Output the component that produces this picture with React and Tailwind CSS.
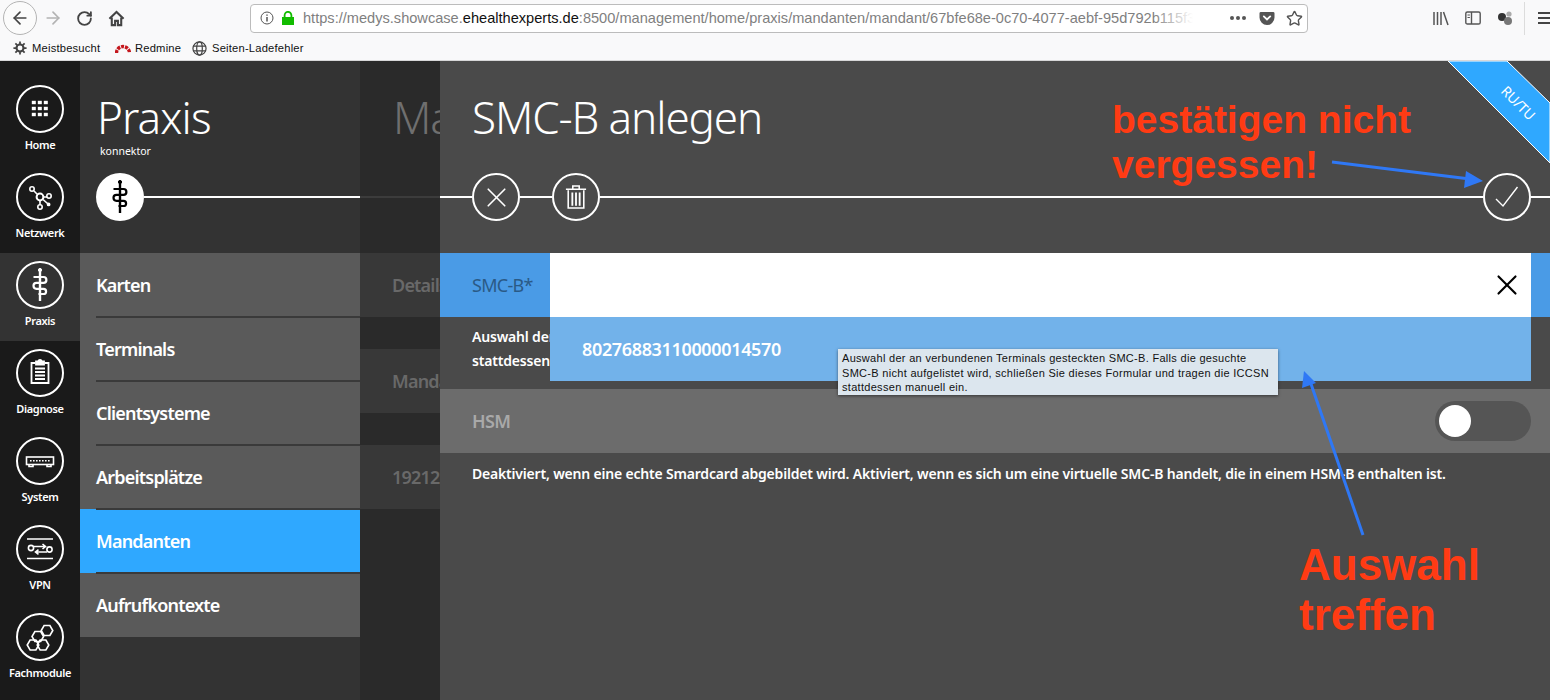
import React from 'react';
import { ArrowLeft, ArrowRight, RotateCw, Star, X } from 'lucide-react';

const sans = 'font-["Noto_Sans",sans-serif]';

function Caduceus({ className = 'text-white' }) {
  return (
    <svg viewBox="0 0 48 48" className={`w-12 h-12 ${className}`} fill="none" stroke="currentColor">
      <path d="M24 8v32" strokeWidth="2.4" />
      <circle cx="24" cy="9" r="1.6" fill="currentColor" />
      <path d="M17.5 16h10a2.9 2.9 0 0 1 0 5.8h-7a3 3 0 0 0 0 6h7a2.6 2.6 0 0 1 0 5.2h-5" strokeWidth="2.2" />
    </svg>
  );
}

function HomeGrid() {
  const cells = [16, 22, 28];
  return (
    <svg viewBox="0 0 48 48" className="w-12 h-12 text-white" fill="currentColor">
      {cells.map((y) => cells.map((x) => <rect key={`${x}-${y}`} x={x - 0.2} y={y - 0.2} width="4" height="3.4" />))}
    </svg>
  );
}

function Network() {
  return (
    <svg viewBox="0 0 48 48" className="w-12 h-12 text-white" fill="none" stroke="currentColor" strokeWidth="1.6">
      <path d="M18 18l4 4M27 24h4M24 27v5" />
      <circle cx="24" cy="24" r="3.4" strokeWidth="2" />
      <circle cx="16" cy="16" r="2.2" />
      <circle cx="33" cy="23" r="2.2" />
      <circle cx="24" cy="34" r="2.2" />
      <path d="M27 26.5l4.5 4" />
      <circle cx="32.6" cy="31.4" r="1.1" fill="currentColor" />
    </svg>
  );
}

function Clipboard() {
  return (
    <svg viewBox="0 0 48 48" className="w-12 h-12 text-white" fill="none" stroke="currentColor" strokeWidth="1.8">
      <path d="M19.5 14H15.5v20h17V14h-4" />
      <path d="M20 15.5v-3h2.4a1.6 1.6 0 0 1 3.2 0H28v3z" fill="currentColor" />
      <path d="M19 19.5h10M19 23h10M19 26.5h10M19 30h10" />
    </svg>
  );
}

function Switch() {
  return (
    <svg viewBox="0 0 48 48" className="w-12 h-12 text-white" fill="none" stroke="currentColor" strokeWidth="1.6">
      <rect x="10.5" y="20" width="27" height="7.5" />
      <path d="M13 27.5v2h4v-2M31 27.5v2h4v-2" />
      <path d="M14 23.8h20" strokeDasharray="1.6 1.4" />
    </svg>
  );
}

function Vpn() {
  return (
    <svg viewBox="0 0 48 48" className="w-12 h-12 text-white" fill="none" stroke="currentColor" strokeWidth="1.6">
      <path d="M11 14h26M11 33.5h26" />
      <circle cx="15" cy="23" r="2.6" />
      <circle cx="33.5" cy="24.5" r="2.6" />
      <path d="M18 21.5h11M26.5 19l3 2.5-3 2.5" />
      <path d="M31 27H20M22.5 24.6l-3 2.4 3 2.4" />
    </svg>
  );
}

function hexPoints(cx, cy, r) {
  return [0, 60, 120, 180, 240, 300]
    .map((a) => `${cx + r * Math.cos((a * Math.PI) / 180)},${cy + r * Math.sin((a * Math.PI) / 180)}`)
    .join(' ');
}

function Hexes() {
  return (
    <svg viewBox="0 0 48 48" className="w-12 h-12 text-white" fill="none" stroke="currentColor" strokeWidth="1.6">
      <polygon points={hexPoints(31, 17.5, 5.8)} />
      <polygon points={hexPoints(21.8, 23.5, 5.8)} />
      <polygon points={hexPoints(17, 32, 5.8)} />
      <polygon points={hexPoints(27, 32, 5.8)} />
    </svg>
  );
}

const navItems = [
  { label: 'Home', icon: <HomeGrid /> },
  { label: 'Netzwerk', icon: <Network /> },
  { label: 'Praxis', icon: <Caduceus />, active: true },
  { label: 'Diagnose', icon: <Clipboard /> },
  { label: 'System', icon: <Switch /> },
  { label: 'VPN', icon: <Vpn /> },
  { label: 'Fachmodule', icon: <Hexes /> },
];

const menuItems = ['Karten', 'Terminals', 'Clientsysteme', 'Arbeitsplätze', 'Mandanten', 'Aufrufkontexte'];

function BrowserChrome() {
  return (
    <div className='h-[61px] shrink-0 bg-[#f9f9fa] border-b border-[#d7d7d8] font-["Liberation_Sans",sans-serif]'>
      <div className="h-[36px] flex items-center">
        <div className="ml-[3px] w-[34px] h-[34px] shrink-0 rounded-full border border-[#b4b4b4] bg-[#fbfbfb] flex items-center justify-center">
          <ArrowLeft size={20} strokeWidth={2} className="text-[#444]" />
        </div>
        <ArrowRight size={20} strokeWidth={2} className="ml-[6px] text-[#b3b3b3] shrink-0" />
        <RotateCw size={17} strokeWidth={2.6} className="ml-[13px] text-[#444] shrink-0" />
        <svg viewBox="0 0 18 18" className="ml-[15px] w-[17px] h-[17px] shrink-0 text-[#444]" fill="none" stroke="currentColor" strokeWidth="2.2">
          <path d="M1.5 9.2L9 2l7.5 7.2" />
          <path d="M4 8v8h3.5v-4.5h3V16H14V8" />
        </svg>
        <div className="ml-[125px] w-[1058px] h-[29px] shrink-0 bg-white border border-[#bcbcbc] rounded-[4px] flex items-center">
          <svg viewBox="0 0 14 14" className="ml-[9px] w-[14px] h-[14px] shrink-0 text-[#555]" fill="none" stroke="currentColor" strokeWidth="1">
            <circle cx="7" cy="7" r="6" />
            <path d="M7 6v4.4" strokeWidth="1.5" />
            <path d="M7 3.4v1.4" strokeWidth="1.5" />
          </svg>
          <svg viewBox="0 0 14 14" className="ml-[7px] w-[14px] h-[14px] shrink-0 text-[#12bc00]" fill="currentColor">
            <path d="M1 6h12v8H1z" />
            <path d="M3.6 6.5V4.2a3.4 3.4 0 0 1 6.8 0v2.3" fill="none" stroke="currentColor" strokeWidth="1.8" />
          </svg>
          <div className="relative ml-[8px] w-[890px] shrink-0 overflow-hidden whitespace-nowrap pt-px text-[14.6px] text-[#7f7f7f]">
            https://medys.showcase.<span className="text-[#111]">ehealthexperts.de</span>:8500/management/home/praxis/mandanten/mandant/67bfe68e-0c70-4077-aebf-95d792b115f3
            <div className="absolute top-0 bottom-0 right-0 w-[40px] bg-gradient-to-r from-white/0 to-white" />
          </div>
          <div className="ml-[37px] flex gap-[2px] shrink-0">
            <span className="w-[4px] h-[4px] rounded-full bg-[#555]" />
            <span className="w-[4px] h-[4px] rounded-full bg-[#555]" />
            <span className="w-[4px] h-[4px] rounded-full bg-[#555]" />
          </div>
          <svg viewBox="0 0 16 16" className="ml-[13px] w-[16px] h-[15px] shrink-0 text-[#555]">
            <path d="M1.5 1h13A1.5 1.5 0 0 1 16 2.5V7A8 8 0 0 1 0 7V2.5A1.5 1.5 0 0 1 1.5 1z" fill="currentColor" />
            <path d="M4.6 5.8L8 9l3.4-3.2" fill="none" stroke="#fff" strokeWidth="2" strokeLinecap="round" />
          </svg>
          <Star size={17} strokeWidth={2} className="ml-[11px] text-[#555] shrink-0" />
        </div>
        <svg viewBox="0 0 16 16" className="ml-[125px] w-[16px] h-[16px] shrink-0 text-[#555]" fill="none" stroke="currentColor" strokeWidth="1.5">
          <path d="M1 2v13M4.5 2v13M8 2v13M10.5 2l4.5 13" />
        </svg>
        <svg viewBox="0 0 16 16" className="ml-[16px] w-[16px] h-[16px] shrink-0 text-[#555]" fill="none" stroke="currentColor" strokeWidth="1.4">
          <rect x="0.8" y="2" width="14.4" height="12" rx="1.6" />
          <path d="M6.5 2v12" />
          <path d="M2.5 5h2.4M2.5 7.5h2.4" strokeWidth="1" />
        </svg>
        <svg viewBox="0 0 16 16" className="ml-[16px] w-[16px] h-[16px] shrink-0">
          <circle cx="5" cy="7" r="4" fill="#333" />
          <circle cx="11" cy="11" r="4" fill="#777" />
          <circle cx="12" cy="4" r="2.6" fill="#aaa" />
        </svg>
        <div className="ml-[11px] w-px h-[33px] bg-[#dcdcdc] shrink-0" />
        <div className="ml-[13px] flex flex-col gap-[3px] shrink-0 w-[13px] overflow-hidden">
          <span className="h-[2px] w-[16px] bg-[#444]" />
          <span className="h-[2px] w-[16px] bg-[#444]" />
          <span className="h-[2px] w-[16px] bg-[#444]" />
        </div>
      </div>
      <div className="h-[24px] flex items-center text-[11.2px] text-[#111] tracking-[0.2px]">
        <svg viewBox="0 0 16 16" className="ml-[13px] w-[14px] h-[14px] shrink-0 text-[#444]" fill="none" stroke="currentColor">
          <circle cx="8" cy="8" r="4" strokeWidth="2.4" />
          <path d="M8 0.5v3M8 12.5v3M0.5 8h3M12.5 8h3M2.7 2.7l2.1 2.1M11.2 11.2l2.1 2.1M2.7 13.3l2.1-2.1M11.2 4.8l2.1-2.1" strokeWidth="2" />
        </svg>
        <span className="ml-[5px] w-[83px] shrink-0">Meistbesucht</span>
        <svg viewBox="0 0 16 12" className="w-[16px] h-[12px] shrink-0" fill="none">
          <path d="M1.5 11A6.5 6.5 0 0 1 14.5 11" stroke="#c4161c" strokeWidth="3.4" strokeDasharray="3 1" />
        </svg>
        <span className="ml-[4px] w-[58px] shrink-0">Redmine</span>
        <svg viewBox="0 0 16 16" className="-ml-px w-[15px] h-[15px] shrink-0 text-[#444]" fill="none" stroke="currentColor" strokeWidth="1.3">
          <circle cx="8" cy="8" r="7" />
          <ellipse cx="8" cy="8" rx="3" ry="7" />
          <path d="M1.4 5.5h13.2M1.4 10.5h13.2" />
        </svg>
        <span className="ml-[5px]">Seiten-Ladefehler</span>
      </div>
    </div>
  );
}

function Sidebar() {
  return (
    <nav className="w-[80px] shrink-0 bg-[#1a1a1a] pt-[16px]">
      {navItems.map((item) => (
        <div key={item.label} className={`h-[88px] pt-[8px] flex flex-col items-center ${item.active ? 'bg-[#333333]' : ''}`}>
          <div className="w-[48px] h-[48px] rounded-full border-2 border-white flex items-center justify-center shrink-0">
            <div className="shrink-0">{item.icon}</div>
          </div>
          <span className="mt-[4px] leading-[16px] text-[11px] font-semibold tracking-[-0.35px] text-white whitespace-nowrap">{item.label}</span>
        </div>
      ))}
    </nav>
  );
}

function PraxisPanel() {
  return (
    <section className="w-[280px] shrink-0 bg-[#333333] flex flex-col">
      <div className="h-[112px] pl-[17px] pt-[26px]">
        <h1 className="text-[44px] leading-[60px] font-light tracking-[-0.9px] text-white">Praxis</h1>
        <p className="ml-[3px] -mt-[3px] text-[10.5px] leading-[14px] text-white">konnektor</p>
      </div>
      <div className="h-[48px] pl-[16px] flex items-center">
        <div className="w-[48px] h-[48px] rounded-full bg-white flex items-center justify-center shrink-0">
          <Caduceus className="text-black" />
        </div>
        <div className="flex-1 h-[2px] bg-white" />
      </div>
      <div className="mt-[32px]">
        {menuItems.map((item, i) => (
          <div
            key={item}
            className={`relative h-[64px] pl-[16px] flex items-center text-[18px] font-semibold tracking-[-0.8px] text-white ${item === 'Mandanten' ? 'bg-[#2fa8ff]' : 'bg-[#5a5a5a]'}`}
          >
            {item}
            {i < menuItems.length - 1 && <div className="absolute left-[16px] right-0 -bottom-px h-[2px] bg-[#3a3a3a] z-10" />}
          </div>
        ))}
      </div>
    </section>
  );
}

function MandantenPanel() {
  const rows = ['Details', 'Mandant', '19212'];
  return (
    <section className="w-[80px] shrink-0 bg-[#2a2a2a] flex flex-col overflow-hidden whitespace-nowrap">
      <div className="h-[112px] pl-[33px] pt-[26px]">
        <h2 className="text-[44px] leading-[60px] font-light tracking-[-1px] text-[#6f6f6f]">Mandant</h2>
      </div>
      <div className="h-[48px] flex items-center">
        <div className="w-full h-[2px] bg-[#3c3c3c]" />
      </div>
      <div className="mt-[32px] flex flex-col gap-[32px]">
        {rows.map((row) => (
          <div key={row} className="h-[64px] pl-[32px] flex items-center bg-[#383838] text-[18px] font-semibold tracking-[-0.8px] text-[#696969]">
            {row}
          </div>
        ))}
      </div>
    </section>
  );
}

function RoundBtn({ children }) {
  return (
    <div className="w-[48px] h-[48px] rounded-full border-2 border-white flex items-center justify-center shrink-0 text-white">
      {children}
    </div>
  );
}

function FormPanel() {
  return (
    <section className="relative flex-1 bg-[#4a4a4a] overflow-hidden">
      <div className="h-[112px] pl-[32px] pt-[26px]">
        <h2 className="text-[44px] leading-[60px] font-light tracking-[-1.1px] text-white whitespace-nowrap">SMC-B anlegen</h2>
      </div>
      <div className="h-[48px] flex items-center">
        <div className="w-[32px] h-[2px] bg-white" />
        <RoundBtn>
          <X size={33} strokeWidth={1.2} />
        </RoundBtn>
        <div className="w-[32px] h-[2px] bg-white" />
        <RoundBtn>
          <svg viewBox="0 0 24 28" className="w-[22px] h-[26px]" fill="none" stroke="currentColor" strokeWidth="1.7">
            <path d="M1 5.5h22M8.5 5V2h7v3" />
            <path d="M3.5 6.5V26h17V6.5" />
            <path d="M8 9v14.5M12 9v14.5M16 9v14.5" strokeWidth="2" />
          </svg>
        </RoundBtn>
        <div className="flex-1 h-[2px] bg-white" />
        <RoundBtn>
          <svg viewBox="0 0 26 26" className="w-[26px] h-[26px]" fill="none" stroke="currentColor" strokeWidth="1.4">
            <path d="M2 15l7 7L23.5 3" />
          </svg>
        </RoundBtn>
        <div className="w-[19px] h-[2px] bg-white" />
      </div>

      <div className="relative mt-[32px] h-[64px] flex bg-[#4a9be6]">
        <div className="w-[110px] pl-[32px] flex items-center text-[18px] tracking-[-0.7px] text-[#2a5a86] shrink-0">SMC-B*</div>
        <div className="w-[981px] bg-white flex items-center justify-end pr-[7px] text-black shrink-0">
          <X size={34} strokeWidth={1.5} />
        </div>
        <div className="absolute left-[110px] top-[64px] w-[981px] h-[64px] z-10 bg-[#72b2ea] pl-[32px] flex items-center text-[18px] font-semibold tracking-[-0.35px] text-white">
          80276883110000014570
        </div>
      </div>
      <p className="h-[72px] pl-[32px] pt-[8px] text-[14px] leading-[24px] font-semibold tracking-[-0.19px] text-white whitespace-nowrap">
        Auswahl der an verbundenen Terminals gesteckten SMC-B. Falls die gesuchte SMC-B nicht aufgelistet wird, schließen Sie dieses Formular und tragen die ICCSN
        <br />
        stattdessen manuell ein.
      </p>
      <div className="h-[64px] bg-[#6c6c6c] pl-[32px] pr-[19px] flex items-center justify-between">
        <span className="text-[18px] font-semibold tracking-[-0.6px] text-[#a9a9a9]">HSM</span>
        <div className="w-[96px] h-[40px] rounded-full bg-[#555555] pl-[4px] flex items-center">
          <div className="w-[32px] h-[32px] rounded-full bg-white" />
        </div>
      </div>
      <p className="pl-[32px] pt-[9px] text-[14px] leading-[24px] font-semibold tracking-[-0.19px] text-white whitespace-nowrap">
        Deaktiviert, wenn eine echte Smardcard abgebildet wird. Aktiviert, wenn es sich um eine virtuelle SMC-B handelt, die in einem HSM-B enthalten ist.
      </p>

      {/* tooltip des browsers */}
      <div className='absolute left-[398px] top-[288px] z-20 w-[440px] h-[46px] bg-[#dce6ee] shadow-[0_1px_3px_rgba(0,0,0,0.5)] pl-[4px] pt-[2px] font-["Liberation_Sans",sans-serif] text-[11px] leading-[14.5px] tracking-[0.3px] text-[#111] whitespace-nowrap'>
        Auswahl der an verbundenen Terminals gesteckten SMC-B. Falls die gesuchte
        <br />
        SMC-B nicht aufgelistet wird, schließen Sie dieses Formular und tragen die ICCSN
        <br />
        stattdessen manuell ein.
      </div>

      {/* eckband */}
      <svg viewBox="0 0 110 110" className="absolute right-0 top-0 w-[110px] h-[110px] z-10">
        <polygon points="8,0 67,0 110,42 110,102" fill="#2fa8ff" stroke="#fff" strokeWidth="1" />
      </svg>
      <div className='absolute left-[1048px] top-[33px] z-20 w-[60px] text-center rotate-45 font-["Noto_Sans",sans-serif] text-[14px] leading-[18px] tracking-[-0.2px] text-white'>RU/TU</div>

      {/* anmerkungen aus dem screenshot */}
      <div className='absolute left-[672px] top-[36px] z-20 font-["Liberation_Sans",sans-serif] font-bold text-[39px] leading-[45px] text-[#ff3b14] whitespace-nowrap'>
        bestätigen nicht
        <br />
        vergessen!
      </div>
      <div className='absolute left-[859px] top-[479px] z-20 font-["Liberation_Sans",sans-serif] font-bold text-[44px] leading-[50px] text-[#ff3b14] whitespace-nowrap'>
        Auswahl
        <br />
        treffen
      </div>
      <svg viewBox="0 0 1110 639" className="absolute inset-0 w-[1110px] h-[639px] z-30 pointer-events-none" fill="#2f78f5" stroke="none">
        <path d="M892 101L1030 118" stroke="#2f78f5" strokeWidth="3" />
        <polygon points="1043,120 1026,110 1024,127" />
        <path d="M923 474L870 320" stroke="#2f78f5" strokeWidth="3" />
        <polygon points="864,310 862,327 876,322" />
      </svg>
    </section>
  );
}

export default function App() {
  return (
    <div className={`h-[700px] w-[1550px] overflow-hidden flex flex-col ${sans}`}>
      <BrowserChrome />
      <main className="flex-1 flex min-h-0">
        <Sidebar />
        <PraxisPanel />
        <MandantenPanel />
        <FormPanel />
      </main>
    </div>
  );
}
